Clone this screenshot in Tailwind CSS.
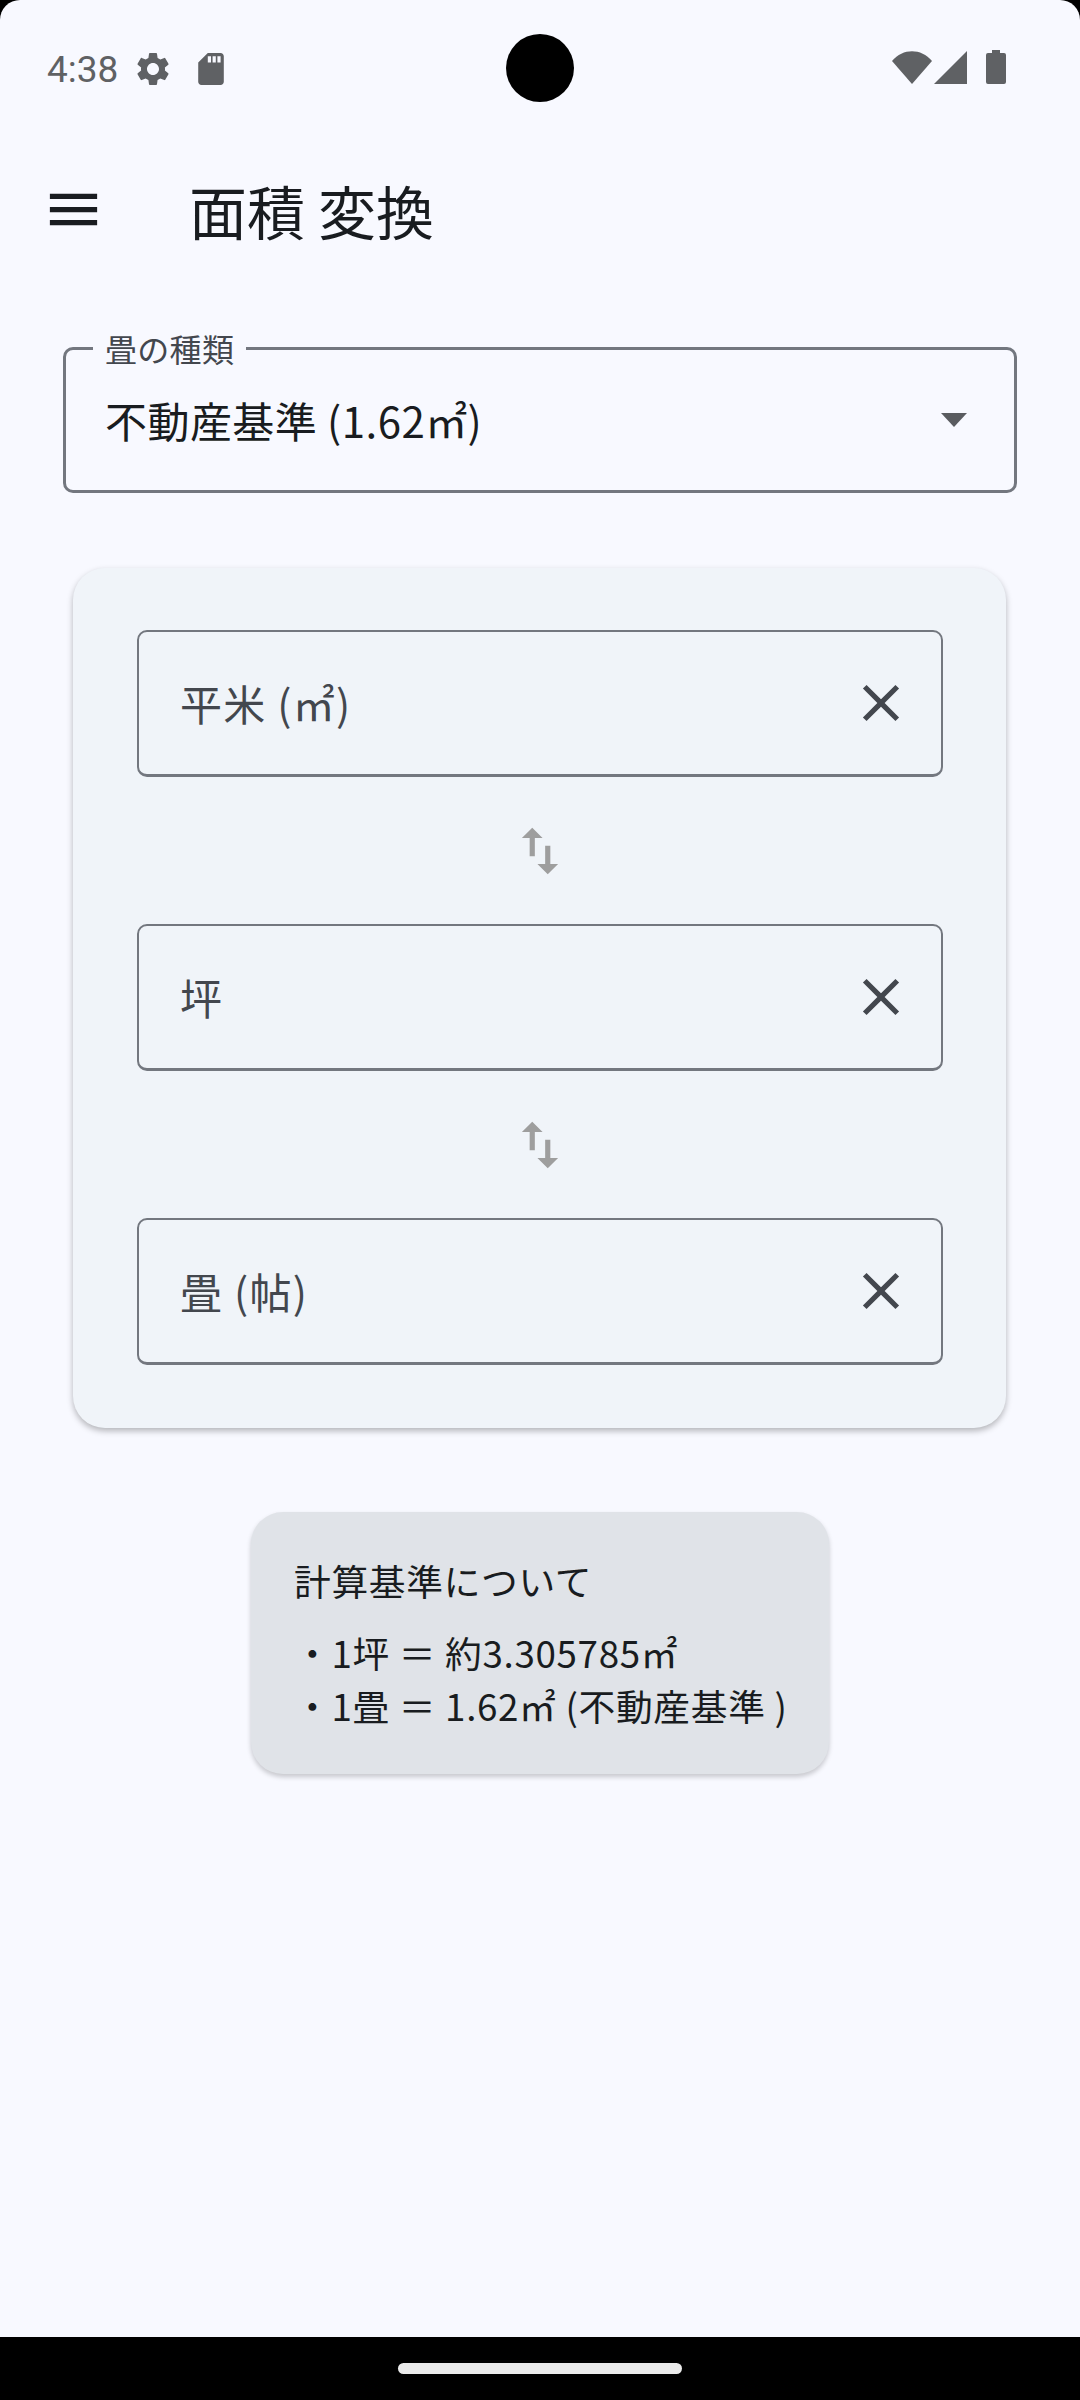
<!DOCTYPE html>
<html lang="ja">
<head>
    <meta charset="UTF-8">
    <meta name="viewport" content="width=device-width, initial-scale=1.0">
    <title>面積 変換</title>
    <script src="https://cdn.jsdelivr.net/npm/@tailwindcss/browser@4"></script>
</head>
<body class="bg-black">
    <div class="relative w-[1080px] h-[2400px] flex flex-col bg-black overflow-hidden font-['Noto_Sans_CJK_JP',sans-serif]">
        <div class="flex-1 flex flex-col bg-[#f8f9ff] rounded-t-[20px]">
            <!-- status bar -->
            <div class="h-[134px] pt-[3px] flex items-center justify-between pl-[47px] pr-[74px] text-[#5f6164]">
                <div class="flex items-center">
                    <span class="mt-[2px] font-['Roboto',sans-serif] text-[37px] leading-none">4:38</span>
                    <svg class="w-[40px] h-[40px] ml-[15px]" viewBox="0 0 24 24" fill="currentColor"><path d="M19.14 12.94c.04-.3.06-.61.06-.94 0-.32-.02-.64-.07-.94l2.03-1.58a.49.49 0 0 0 .12-.61l-1.92-3.32a.488.488 0 0 0-.59-.22l-2.39.96c-.5-.38-1.03-.7-1.62-.94l-.36-2.54a.484.484 0 0 0-.48-.41h-3.84c-.24 0-.43.17-.47.41l-.36 2.54c-.59.24-1.13.57-1.62.94l-2.39-.96c-.22-.08-.47 0-.59.22L2.74 8.87c-.12.21-.08.47.12.61l2.03 1.58c-.05.3-.09.63-.09.94s.02.64.07.94l-2.03 1.58a.49.49 0 0 0-.12.61l1.92 3.32c.12.22.37.29.59.22l2.39-.96c.5.38 1.03.7 1.62.94l.36 2.54c.05.24.24.41.48.41h3.84c.24 0 .44-.17.47-.41l.36-2.54c.59-.24 1.13-.56 1.62-.94l2.39.96c.22.08.47 0 .59-.22l1.92-3.32c.12-.22.07-.47-.12-.61l-2.01-1.58zM12 15.6c-1.98 0-3.6-1.62-3.6-3.6s1.62-3.6 3.6-3.6 3.6 1.62 3.6 3.6-1.62 3.6-3.6 3.6z"/></svg>
                    <svg class="w-[26px] h-[32px] ml-[25px]" viewBox="4 2 16 20" fill="currentColor"><path d="M18 2h-8L4.02 8 4 20c0 1.1.9 2 2 2h12c1.1 0 2-.9 2-2V4c0-1.1-.9-2-2-2zm-6 6h-2V4h2v4zm3 0h-2V4h2v4zm3 0h-2V4h2v4z"/></svg>
                </div>
                <div class="flex items-center -mt-[3px]">
                    <svg class="w-[40px] h-[33px]" viewBox="0 0 40 33" fill="currentColor"><path d="M0 10 C11 -3 29 -3 40 10 L20 33 Z"/></svg>
                    <svg class="w-[33px] h-[33px] ml-[2px]" viewBox="0 0 33 33" fill="currentColor"><path d="M33 0V33H0Z"/></svg>
                    <svg class="w-[20px] h-[34px] ml-[19px]" viewBox="0 0 20 34" fill="currentColor"><path d="M6 0h8v3h4a2 2 0 0 1 2 2v27a2 2 0 0 1-2 2H2a2 2 0 0 1-2-2V5a2 2 0 0 1 2-2h4z"/></svg>
                </div>
            </div>

            <!-- top app bar -->
            <div class="h-[150px] flex items-center pl-[42px] text-[#191c20]">
                <svg class="w-[63px] h-[63px] shrink-0" viewBox="0 0 24 24" fill="currentColor"><path d="M3 18h18v-2H3v2zm0-5h18v-2H3v2zm0-7v2h18V6H3z"/></svg>
                <h1 class="ml-[84px] mt-[2px] text-[58px] leading-none font-normal">面積 変換</h1>
            </div>

            <!-- select -->
            <div class="relative mt-[63px] mx-[63px] h-[146px] border-[3px] border-[#73777f] rounded-[10px] flex items-center justify-between pl-[39px] pr-[47px] shrink-0">
                <span class="absolute left-[27px] -top-[25px] px-[12px] bg-[#f8f9ff] text-[32px] leading-[46px] tracking-[0.3px] text-[#43474e]">畳の種類</span>
                <span class="text-[42px] leading-none tracking-[0.45px] text-[#191c20]">不動産基準 (1.62㎡)</span>
                <svg class="w-[26px] h-[14px]" viewBox="0 0 26 14" fill="#5a5c60"><path d="M0 0H26L13 14Z"/></svg>
            </div>

            <!-- converter card -->
            <div class="mt-[75px] ml-[73px] mr-[74px] rounded-[32px] bg-[#f0f4f9] shadow-[0_3px_6px_rgba(0,0,0,0.28)] pl-[64px] pr-[63px] pt-[62px] pb-[63px] flex flex-col shrink-0">
                <div class="h-[147px] border-x-2 border-t-2 border-b-[3px] border-[#73777f] rounded-[10px] flex items-center justify-between pl-[41px] pr-[29px]">
                    <span class="text-[42px] leading-none tracking-[1.3px] text-[#43474e]">平米 (㎡)</span>
                    <svg class="w-[62px] h-[62px]" viewBox="0 0 24 24" fill="#43474e"><path d="M19 6.41L17.59 5 12 10.59 6.41 5 5 6.41 10.59 12 5 17.59 6.41 19 12 13.41 17.59 19 19 17.59 13.41 12 19 6.41z"/></svg>
                </div>
                <div class="h-[147px] flex items-center justify-center">
                    <svg class="w-[62px] h-[62px]" viewBox="0 0 24 24" fill="#9e9e9e"><path d="M16 17.01V10h-2v7.01h-3L15 21l4-3.99h-3zM9 3L5 6.99h3V14h2V6.99h3L9 3z"/></svg>
                </div>
                <div class="h-[147px] border-x-2 border-t-2 border-b-[3px] border-[#73777f] rounded-[10px] flex items-center justify-between pl-[41px] pr-[29px]">
                    <span class="text-[42px] leading-none tracking-[1.3px] text-[#43474e]">坪</span>
                    <svg class="w-[62px] h-[62px]" viewBox="0 0 24 24" fill="#43474e"><path d="M19 6.41L17.59 5 12 10.59 6.41 5 5 6.41 10.59 12 5 17.59 6.41 19 12 13.41 17.59 19 19 17.59 13.41 12 19 6.41z"/></svg>
                </div>
                <div class="h-[147px] flex items-center justify-center">
                    <svg class="w-[62px] h-[62px]" viewBox="0 0 24 24" fill="#9e9e9e"><path d="M16 17.01V10h-2v7.01h-3L15 21l4-3.99h-3zM9 3L5 6.99h3V14h2V6.99h3L9 3z"/></svg>
                </div>
                <div class="h-[147px] border-x-2 border-t-2 border-b-[3px] border-[#73777f] rounded-[10px] flex items-center justify-between pl-[41px] pr-[29px]">
                    <span class="text-[42px] leading-none tracking-[1.3px] text-[#43474e]">畳 (帖)</span>
                    <svg class="w-[62px] h-[62px]" viewBox="0 0 24 24" fill="#43474e"><path d="M19 6.41L17.59 5 12 10.59 6.41 5 5 6.41 10.59 12 5 17.59 6.41 19 12 13.41 17.59 19 19 17.59 13.41 12 19 6.41z"/></svg>
                </div>
            </div>

            <!-- info card -->
            <div class="mt-[84px] self-center w-[578px] h-[262px] rounded-[32px] bg-[#e0e3e8] shadow-[0_3px_5px_rgba(0,0,0,0.2)] pl-[43px] pt-[41px] text-[#191c20] text-[36.75px] tracking-[0.66px] shrink-0">
                <p class="leading-[54px]">計算基準について</p>
                <p class="mt-[19px] leading-[53px]">・1坪 ＝ 約3.305785㎡</p>
                <p class="leading-[53px]">・1畳 ＝ 1.62㎡ (不動産基準 )</p>
            </div>
        </div>

        <!-- navigation bar -->
        <div class="h-[63px] shrink-0 flex items-center justify-center bg-black">
            <div class="w-[284px] h-[11px] rounded-full bg-[#ebebeb]"></div>
        </div>

        <!-- camera cutout -->
        <div class="absolute left-[506px] top-[34px] w-[68px] h-[68px] rounded-full bg-black"></div>
    </div>
</body>
</html>
